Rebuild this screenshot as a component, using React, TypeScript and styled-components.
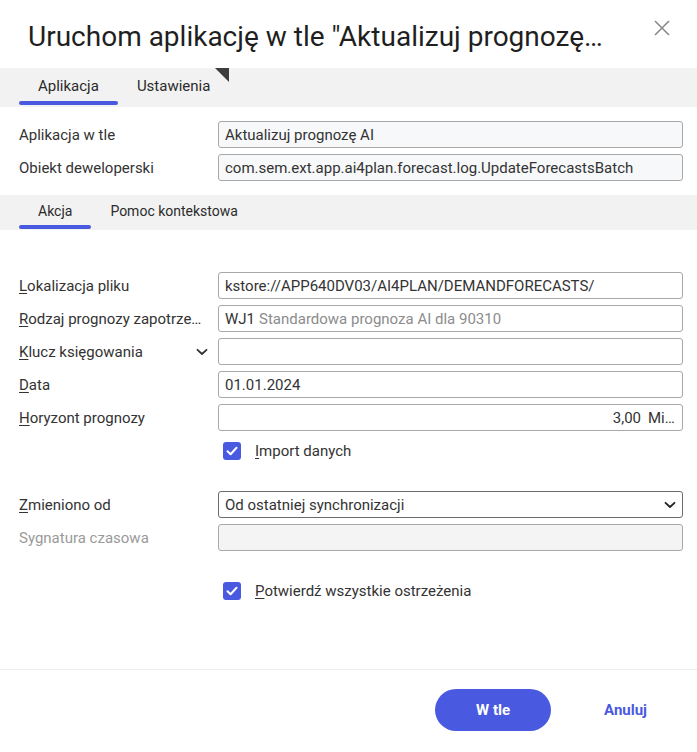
import React from 'react';
import styled, { createGlobalStyle } from 'styled-components';

const GlobalStyle = createGlobalStyle`
  html, body {
    margin: 0;
    padding: 0;
    background: #fff;
  }
  body {
    font-family: Roboto, "Liberation Sans", sans-serif;
    color: #333;
  }
`;

const ACCENT = '#4a5ae0';

const Dialog = styled.div`
  width: 697px;
  height: 752px;
  display: flex;
  flex-direction: column;
  background: #fff;
  box-sizing: border-box;
`;

const Header = styled.div`
  height: 68px;
  box-sizing: border-box;
  display: flex;
  align-items: flex-start;
  padding: 17px 25px 0 28px;
`;

const Title = styled.h1`
  margin: 0;
  width: 580px;
  font-size: 28px;
  font-weight: 400;
  line-height: 40px;
  color: #1f1f1f;
  white-space: nowrap;
  overflow: hidden;
  text-overflow: ellipsis;
`;

const CloseButton = styled.button`
  margin-left: auto;
  margin-top: 1px;
  width: 20px;
  height: 20px;
  padding: 0;
  border: none;
  background: none;
  display: flex;
  align-items: center;
  justify-content: center;
  cursor: pointer;

  & svg {
    stroke: #8a8a8a;
    stroke-width: 1.6;
  }
`;

const TabBar = styled.div<{ $height: number }>`
  height: ${(p) => p.$height}px;
  background: #f2f2f2;
  display: flex;
  padding-left: 19px;
`;

const Tab = styled.div<{ $active?: boolean; $size: number; $pb: number; $ub: number }>`
  position: relative;
  display: flex;
  align-items: center;
  padding: 0 19px ${(p) => p.$pb}px;
  font-size: ${(p) => p.$size}px;
  color: #2b2b2b;
  cursor: pointer;

  &::after {
    content: '';
    display: ${(p) => (p.$active ? 'block' : 'none')};
    position: absolute;
    left: 0;
    right: 0;
    bottom: ${(p) => p.$ub}px;
    height: 4px;
    border-radius: 2px;
    background: ${ACCENT};
  }
`;

const CornerMark = styled.span`
  position: absolute;
  top: 0;
  right: 0;
  width: 0;
  height: 0;
  border-top: 14px solid #3d3d3d;
  border-left: 14px solid transparent;
`;

const FormBlock = styled.div<{ $top: number; $bottom: number }>`
  display: flex;
  flex-direction: column;
  gap: 6px;
  padding: ${(p) => p.$top}px 14px ${(p) => p.$bottom}px 19px;
`;

const Row = styled.div`
  display: flex;
  align-items: center;
  height: 27px;
`;

const LabelCell = styled.div`
  width: 199px;
  flex: 0 0 199px;
  box-sizing: border-box;
  padding-right: 10px;
  display: flex;
  align-items: center;
  justify-content: space-between;
  min-width: 0;
`;

const Label = styled.span<{ $disabled?: boolean }>`
  font-size: 15px;
  color: ${(p) => (p.$disabled ? '#9a9a9a' : '#333')};
  white-space: nowrap;
  overflow: hidden;
  text-overflow: ellipsis;
`;

const Key = styled.span`
  text-decoration: underline;
  text-underline-offset: 2px;
`;

const Field = styled.div<{ $tone?: 'readonly' | 'disabled' | 'plain'; $strong?: boolean; $right?: boolean }>`
  flex: 1;
  height: 27px;
  box-sizing: border-box;
  border: 1px solid ${(p) => (p.$strong ? '#6b6b6b' : '#a8a8a8')};
  border-radius: 3px;
  background: ${(p) =>
    p.$tone === 'readonly' ? '#f7f8fa' : p.$tone === 'disabled' ? '#f4f4f4' : '#fff'};
  display: flex;
  align-items: center;
  justify-content: ${(p) => (p.$right ? 'flex-end' : 'flex-start')};
  padding: 0 6px;
  font-size: 15px;
  color: #333;
  white-space: nowrap;
  overflow: hidden;
  min-width: 0;
`;

const Muted = styled.span`
  color: #8c8c8c;
  margin-left: 4px;
`;

const Unit = styled.span`
  margin-left: 7px;
  max-width: 28px;
  overflow: hidden;
  text-overflow: ellipsis;
  white-space: nowrap;
`;

const SelectText = styled.span`
  flex: 1;
`;

const CheckRow = styled.div`
  display: flex;
  align-items: center;
  height: 27px;
  padding-left: 204px;
  gap: 14px;
  font-size: 15px;
  color: #333;
`;

const CheckBox = styled.span`
  width: 18px;
  height: 18px;
  border-radius: 3px;
  background: ${ACCENT};
  display: flex;
  align-items: center;
  justify-content: center;
`;

const Spacer = styled.div<{ $h: number }>`
  height: ${(p) => p.$h}px;
`;

const Body = styled.div`
  flex: 1;
`;

const Footer = styled.div`
  height: 83px;
  box-sizing: border-box;
  border-top: 1px solid #ececec;
  display: flex;
  align-items: flex-start;
  justify-content: flex-end;
  padding: 19px 50px 0 0;
  gap: 53px;
`;

const PrimaryButton = styled.button`
  width: 116px;
  height: 42px;
  border: none;
  border-radius: 21px;
  background: ${ACCENT};
  color: #fff;
  font-family: Roboto, "Liberation Sans", sans-serif;
  font-size: 15px;
  font-weight: 700;
  cursor: pointer;
`;

const TextButton = styled.button`
  height: 42px;
  border: none;
  background: none;
  padding: 0;
  color: ${ACCENT};
  font-family: Roboto, "Liberation Sans", sans-serif;
  font-size: 15px;
  font-weight: 700;
  cursor: pointer;
`;

const Chevron: React.FC<{ color?: string }> = ({ color = '#333' }) => (
  <svg width="12" height="8" viewBox="0 0 12 8" fill="none">
    <path d="M1.5 1.8 6 6 10.5 1.8" stroke={color} strokeWidth="1.8" strokeLinecap="round" strokeLinejoin="round" />
  </svg>
);

const Check = () => (
  <svg width="12" height="10" viewBox="0 0 12 10" fill="none">
    <path d="M1.5 5.2 4.6 8.2 10.5 1.8" stroke="#fff" strokeWidth="2" strokeLinecap="round" strokeLinejoin="round" />
  </svg>
);

const Labeled: React.FC<{ k: string; rest: string }> = ({ k, rest }) => (
  <Label>
    <Key>{k}</Key>
    {rest}
  </Label>
);

const App: React.FC = () => {
  return (
    <>
      <GlobalStyle />
      <Dialog>
        <Header>
          <Title>Uruchom aplikację w tle "Aktualizuj prognozę AI"</Title>
          <CloseButton aria-label="Zamknij">
            <svg width="16" height="16" viewBox="0 0 16 16" fill="none">
              <path d="M1 1 15 15M15 1 1 15" />
            </svg>
          </CloseButton>
        </Header>

        <TabBar $height={39}>
          <Tab $active $size={15} $pb={4} $ub={2}>Aplikacja</Tab>
          <Tab $size={15} $pb={4} $ub={2}>
            Ustawienia
            <CornerMark />
          </Tab>
        </TabBar>

        <FormBlock $top={14} $bottom={14}>
          <Row>
            <LabelCell>
              <Label>Aplikacja w tle</Label>
            </LabelCell>
            <Field $tone="readonly">Aktualizuj prognozę AI</Field>
          </Row>
          <Row>
            <LabelCell>
              <Label>Obiekt deweloperski</Label>
            </LabelCell>
            <Field $tone="readonly">com.sem.ext.app.ai4plan.forecast.log.UpdateForecastsBatch</Field>
          </Row>
        </FormBlock>

        <TabBar $height={35}>
          <Tab $active $size={14} $pb={3} $ub={1}>Akcja</Tab>
          <Tab $size={14} $pb={3} $ub={1}>Pomoc kontekstowa</Tab>
        </TabBar>

        <Body>
          <FormBlock $top={42} $bottom={0}>
            <Row>
              <LabelCell>
                <Labeled k="L" rest="okalizacja pliku" />
              </LabelCell>
              <Field>kstore://APP640DV03/AI4PLAN/DEMANDFORECASTS/</Field>
            </Row>
            <Row>
              <LabelCell>
                <Labeled k="R" rest="odzaj prognozy zapotrzebowania" />
              </LabelCell>
              <Field>
                WJ1<Muted>Standardowa prognoza AI dla 90310</Muted>
              </Field>
            </Row>
            <Row>
              <LabelCell>
                <Labeled k="K" rest="lucz księgowania" />
                <Chevron />
              </LabelCell>
              <Field />
            </Row>
            <Row>
              <LabelCell>
                <Labeled k="D" rest="ata" />
              </LabelCell>
              <Field>01.01.2024</Field>
            </Row>
            <Row>
              <LabelCell>
                <Labeled k="H" rest="oryzont prognozy" />
              </LabelCell>
              <Field $right>
                3,00<Unit>Miesiące</Unit>
              </Field>
            </Row>
            <CheckRow>
              <CheckBox>
                <Check />
              </CheckBox>
              <span>
                <Key>I</Key>mport danych
              </span>
            </CheckRow>

            <Spacer $h={15} />

            <Row>
              <LabelCell>
                <Labeled k="Z" rest="mieniono od" />
              </LabelCell>
              <Field $strong>
                <SelectText>Od ostatniej synchronizacji</SelectText>
                <Chevron color="#222" />
              </Field>
            </Row>
            <Row>
              <LabelCell>
                <Label $disabled>Sygnatura czasowa</Label>
              </LabelCell>
              <Field $tone="disabled" />
            </Row>

            <Spacer $h={14} />

            <CheckRow>
              <CheckBox>
                <Check />
              </CheckBox>
              <span>
                <Key>P</Key>otwierdź wszystkie ostrzeżenia
              </span>
            </CheckRow>
          </FormBlock>
        </Body>

        <Footer>
          <PrimaryButton>W tle</PrimaryButton>
          <TextButton>Anuluj</TextButton>
        </Footer>
      </Dialog>
    </>
  );
};

export default App;
